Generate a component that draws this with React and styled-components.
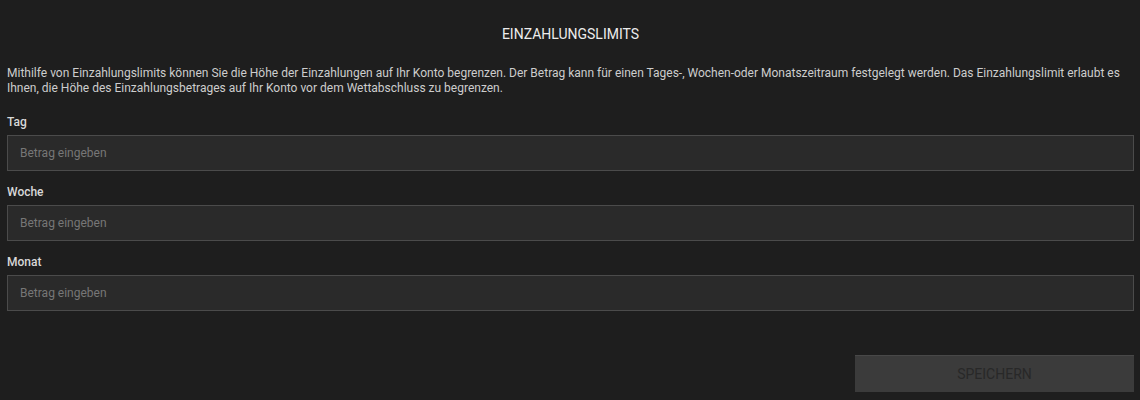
import React from "react";
import styled, { createGlobalStyle } from "styled-components";

const Global = createGlobalStyle`
  html, body { margin: 0; padding: 0; background: #1e1e1e; }
  body { font-family: Roboto, "Liberation Sans", Arial, sans-serif; }
  * { box-sizing: border-box; }
`;

const Page = styled.div`
  width: 1140px;
  height: 400px;
  background: #1e1e1e;
  padding: 24px 6px 0 7px;
  display: flex;
  flex-direction: column;
`;

const Title = styled.h2`
  margin: 0;
  font-size: 14px;
  font-weight: 400;
  line-height: 20px;
  text-align: center;
  color: #ececec;
  text-transform: uppercase;
`;

const Intro = styled.p`
  margin: 22px 0 0;
  font-size: 12px;
  line-height: 15px;
  color: #cdcdcd;
`;

const Fields = styled.div`
  margin-top: 18px;
  display: flex;
  flex-direction: column;
  gap: 13px;
`;

const Field = styled.label`
  display: flex;
  flex-direction: column;
  gap: 5px;
`;

const Label = styled.span`
  font-size: 12px;
  line-height: 15px;
  font-weight: 500;
  color: #d8d8d8;
  padding-top: 1px;
`;

const Input = styled.input`
  height: 36px;
  width: 100%;
  background: #2a2a2a;
  border: 1px solid #4b4b4b;
  border-radius: 0;
  padding: 0 12px;
  font-family: Roboto, "Liberation Sans", Arial, sans-serif;
  font-size: 12px;
  color: #dedede;
  outline: none;
  &::placeholder { color: #777777; }
`;

const Actions = styled.div`
  margin-top: 44px;
  display: flex;
  justify-content: flex-end;
`;

const SaveButton = styled.button`
  width: 279px;
  height: 37px;
  background: #3b3b3b;
  border: none;
  border-top: 1px solid #484848;
  font-family: Roboto, "Liberation Sans", Arial, sans-serif;
  font-size: 14px;
  color: #282828;
  text-transform: uppercase;
  cursor: default;
`;

const periods = ["Tag", "Woche", "Monat"];

export default function App() {
  return (
    <>
      <Global />
      <Page>
        <Title>Einzahlungslimits</Title>
        <Intro>
          Mithilfe von Einzahlungslimits können Sie die Höhe der Einzahlungen auf Ihr Konto begrenzen. Der Betrag kann für einen Tages-, Wochen-oder Monatszeitraum festgelegt werden. Das Einzahlungslimit erlaubt es Ihnen, die Höhe des Einzahlungsbetrages auf Ihr Konto vor dem Wettabschluss zu begrenzen.
        </Intro>
        <Fields>
          {periods.map((p) => (
            <Field key={p}>
              <Label>{p}</Label>
              <Input placeholder="Betrag eingeben" />
            </Field>
          ))}
        </Fields>
        <Actions>
          <SaveButton disabled>Speichern</SaveButton>
        </Actions>
      </Page>
    </>
  );
}
